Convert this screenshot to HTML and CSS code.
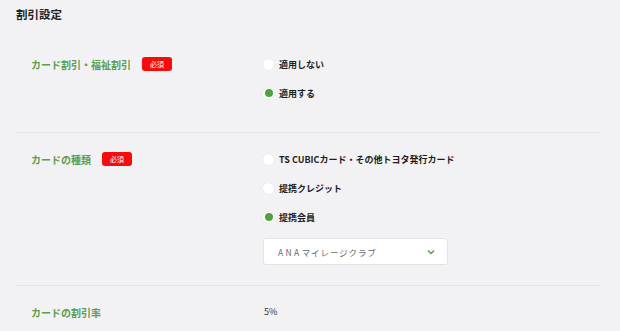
FILE: index.html
```html
<!DOCTYPE html>
<html lang="ja">
<head>
<meta charset="utf-8">
<link rel="stylesheet" href="styles.css">
</head>
<body>
<div class="page">
  <h1 class="title">割引設定</h1>
  <div class="row">
    <div class="label">カード割引・福祉割引<span class="badge">必須</span></div>
    <div class="value">
      <div class="option"><span class="radio"></span>適用しない</div>
      <div class="option"><span class="radio checked"></span>適用する</div>
    </div>
  </div>
  <div class="row">
    <div class="label">カードの種類<span class="badge">必須</span></div>
    <div class="value">
      <div class="option"><span class="radio"></span>TS CUBICカード・その他トヨタ発行カード</div>
      <div class="option"><span class="radio"></span>提携クレジット</div>
      <div class="option"><span class="radio checked"></span>提携会員</div>
      <div class="select">
        <span class="select-text"><span class="latin">ANA</span>マイレージクラブ</span>
        <svg class="chev" width="8" height="6" viewBox="0 0 8 6"><path d="M1 1.5 L4 4.5 L7 1.5" fill="none" stroke="#5c9e4c" stroke-width="1.5"/></svg>
      </div>
    </div>
  </div>
  <div class="row last">
    <div class="label">カードの割引率</div>
    <div class="value">
      <div class="plain">5%</div>
    </div>
  </div>
</div>
</body>
</html>
```

FILE: styles.css
```css
html, body {
  margin: 0;
  padding: 0;
  background: #f2f1f3;
}
body {
  font-family: "Noto Sans CJK JP", "Noto Sans", sans-serif;
  color: #222;
}
.page {
  width: 584px;
  padding: 0 16px;
}
.title {
  margin: 0;
  padding-top: 6px;
  height: 32px;
  font-size: 11.5px;
  line-height: 16px;
  font-weight: 700;
  color: #222;
}
.row {
  display: grid;
  grid-template-columns: 232px 1fr;
  padding: 18px 0 18px 15px;
  border-bottom: 1px solid #e2e1e4;
}
.row.last {
  border-bottom: none;
}
.label {
  display: flex;
  align-items: center;
  height: 16px;
  font-size: 10px;
  font-weight: 700;
  color: #5c9e4c;
}
.badge {
  display: inline-flex;
  align-items: center;
  justify-content: center;
  width: 30px;
  height: 14px;
  margin-left: 11px;
  background: #f50c0c;
  color: #fff;
  border-radius: 3px;
  font-size: 7px;
  font-weight: 400;
}
.value {
  display: flex;
  flex-direction: column;
}
.option {
  display: flex;
  align-items: center;
  height: 16px;
  margin-bottom: 13px;
  font-size: 9px;
  font-weight: 700;
  color: #1d1d1d;
}
.radio {
  position: relative;
  width: 11px;
  height: 11px;
  border-radius: 50%;
  background: #fff;
  box-shadow: 0 0 0 0.5px #e6e6e8;
  margin-right: 5px;
  flex: none;
}
.radio.checked::after {
  content: "";
  position: absolute;
  left: 1.5px;
  top: 1.5px;
  width: 8px;
  height: 8px;
  border-radius: 50%;
  background: #4ea043;
}
.select {
  display: flex;
  align-items: center;
  justify-content: space-between;
  box-sizing: border-box;
  width: 185px;
  height: 27px;
  margin-bottom: 2px;
  padding: 0 12px 0 14px;
  background: #fff;
  border: 1px solid #e3e3e5;
  border-radius: 3px;
}
.select-text {
  font-size: 8.5px;
  letter-spacing: 0.9px;
  color: #6a6a6a;
}
.select-text .latin {
  letter-spacing: 2.4px;
}
.chev {
  display: block;
}
.plain {
  height: 16px;
  line-height: 16px;
  font-size: 9px;
  color: #333;
  padding-left: 1px;
}
```
